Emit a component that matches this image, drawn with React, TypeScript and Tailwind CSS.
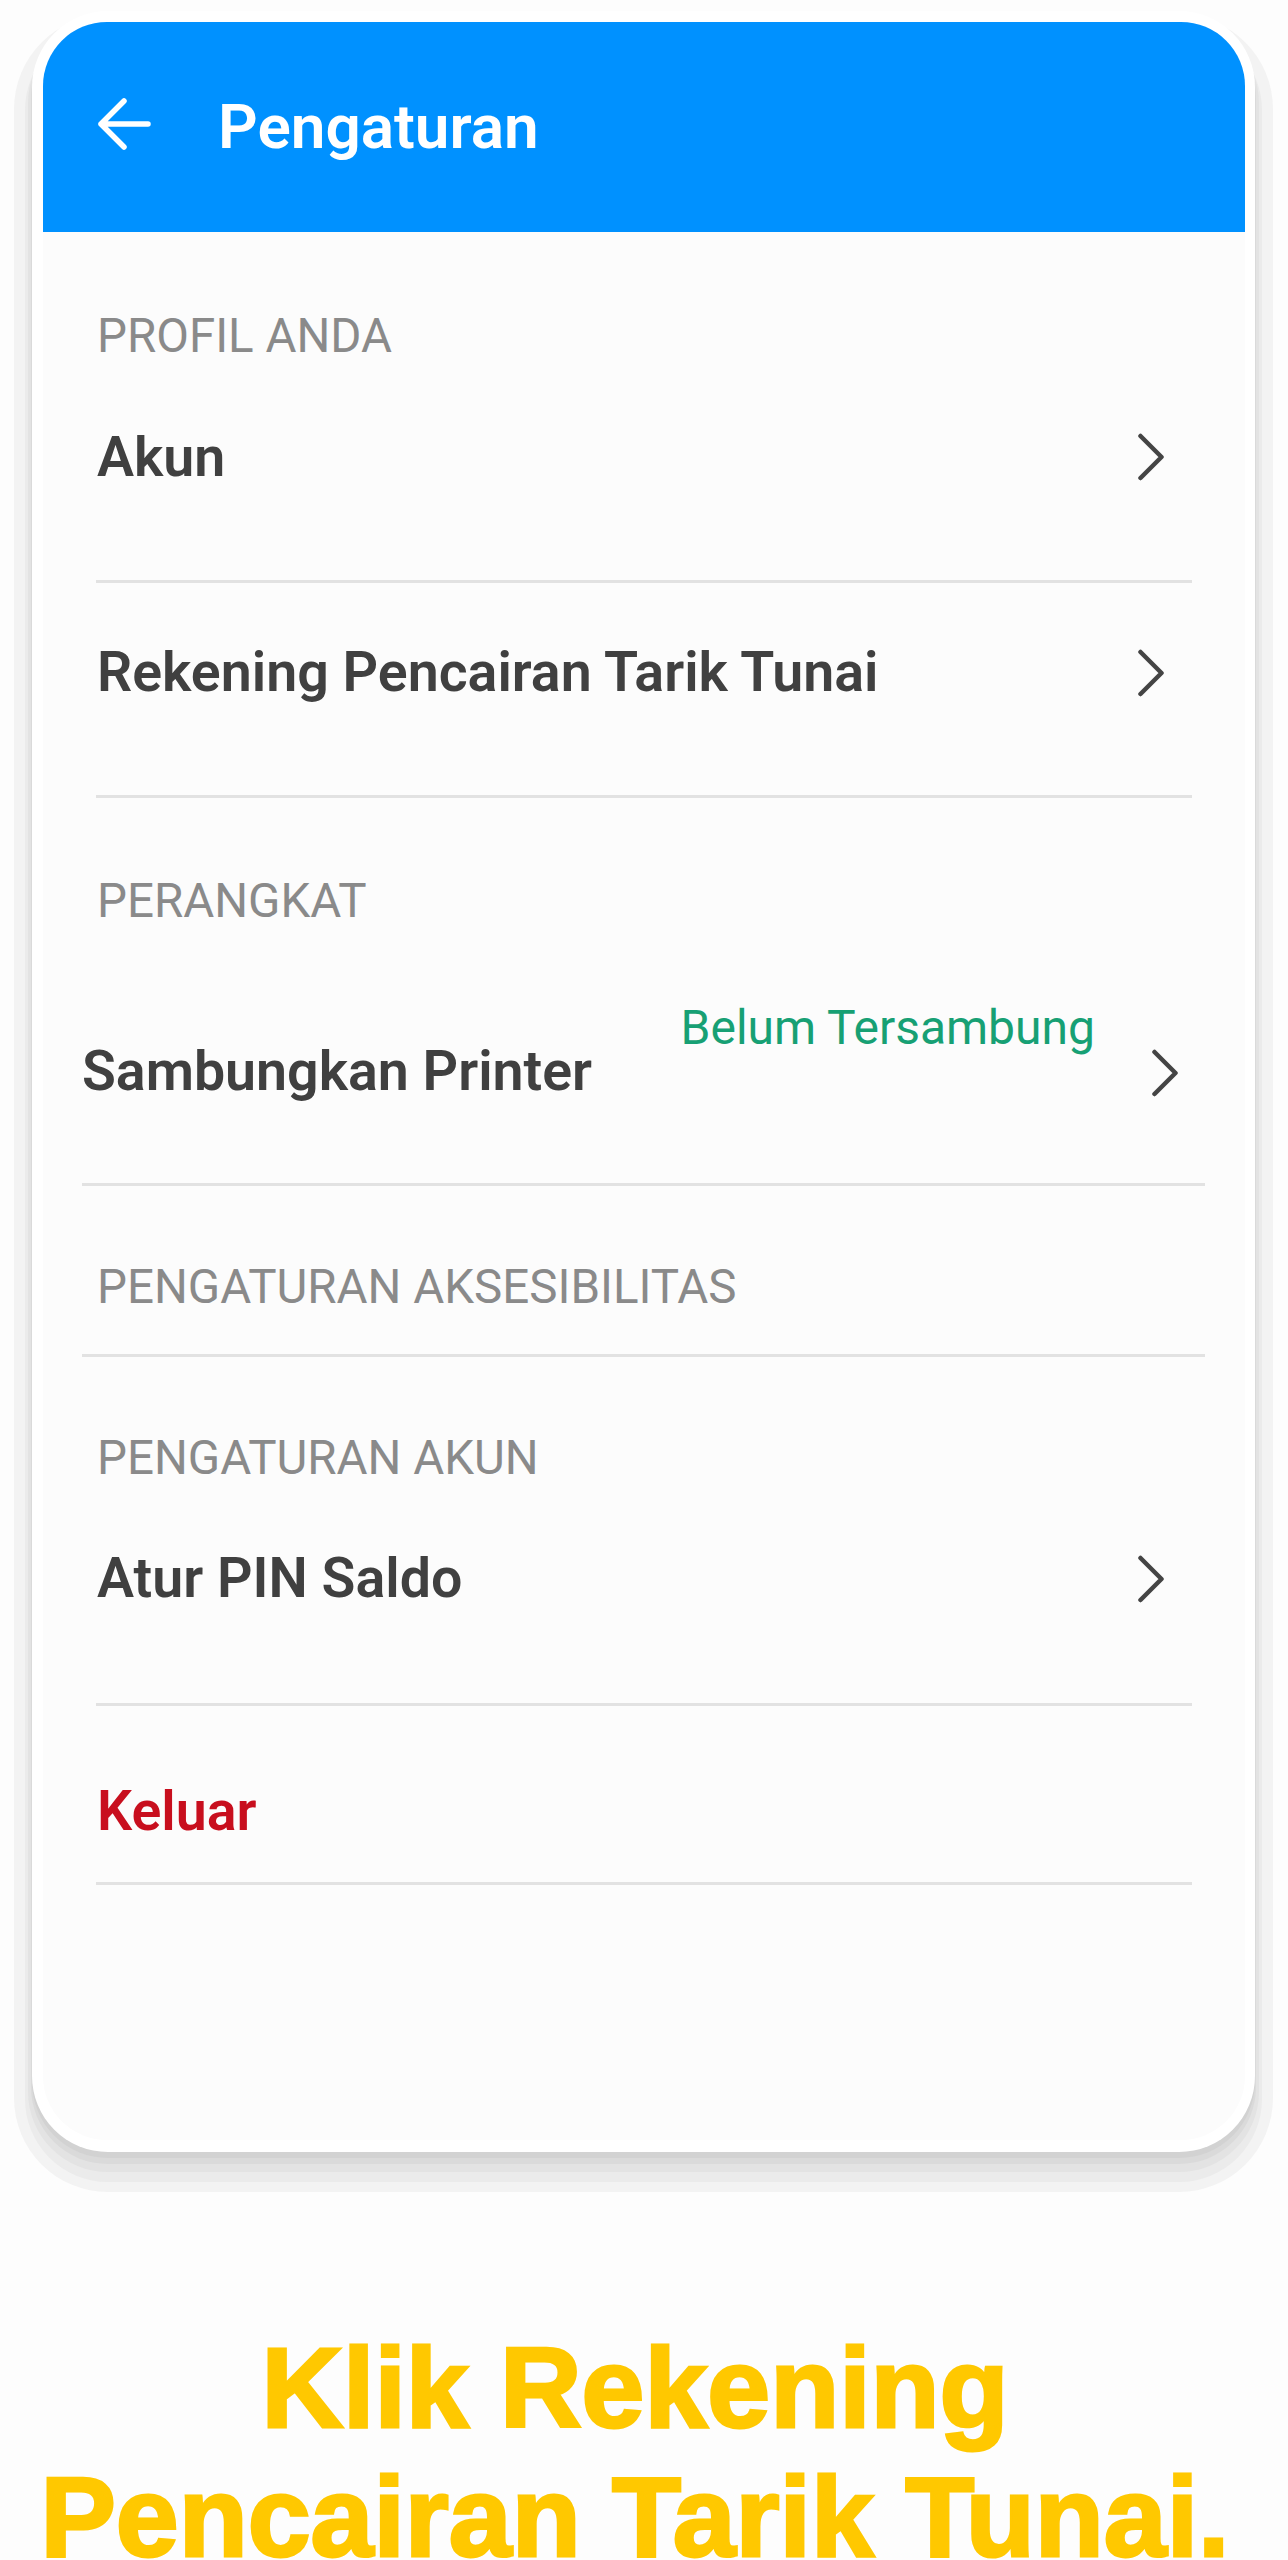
import React from "react";

const Chevron = () => (
  <svg width="28" height="48" viewBox="0 0 28 48" fill="none" className="shrink-0">
    <path d="M3.5 3 L24.5 24 L3.5 45" stroke="#444444" strokeWidth="4.5" strokeLinecap="round" strokeLinejoin="round" />
  </svg>
);

const Divider = () => <div className="mx-[53px] h-[3px] bg-[#e2e2e2]" />;
const WideDivider = () => <div className="ml-[39px] mr-[40px] h-[3px] bg-[#e2e2e2]" />;

const Label = ({ children, mt }: { children: React.ReactNode; mt: string }) => (
  <div className={`${mt} pl-[54px] text-[47.5px] leading-none text-[#8a8a8a]`}>{children}</div>
);

const Row = ({ children, mt }: { children: React.ReactNode; mt: string }) => (
  <div className={`${mt} flex items-center justify-between pl-[54px] pr-[80px]`}>
    <span className="text-[55.5px] leading-none font-semibold text-[#404040]">{children}</span>
    <Chevron />
  </div>
);

export default function App() {
  return (
    <div className="h-[2560px] w-[1288px] overflow-hidden bg-[#fdfdfd] font-['Roboto',sans-serif]">
      <div className="pl-[32px] pt-[11px]">
        <div className="h-[2141px] w-[1223px] rounded-[76px] bg-white p-[11px] shadow-[0_6px_0_0_#d2d2d2,0_11px_0_1px_#dadada,0_16px_0_4px_#e3e3e3,0_23px_0_7px_#ebebeb,0_22px_0_18px_#f3f3f3]">
          <div className="flex h-[2118px] w-[1202px] flex-col overflow-hidden rounded-[64px] bg-[#fcfcfc]">
            <div className="flex h-[210px] shrink-0 items-center bg-[#0091ff] pl-[54px]">
              <svg width="54" height="54" viewBox="0 0 54 54" fill="none" className="mb-[7px] shrink-0">
                <path d="M4 27 H51 M27 4 L4 27 L27 50" stroke="white" strokeWidth="5.5" strokeLinecap="round" strokeLinejoin="round" />
              </svg>
              <span className="ml-[67px] text-[62px] leading-none font-semibold text-white">Pengaturan</span>
            </div>

            <Label mt="mt-[81px]">PROFIL ANDA</Label>
            <Row mt="mt-[69px]">Akun</Row>
            <div className="mt-[95px]"><Divider /></div>
            <Row mt="mt-[62px]">Rekening Pencairan Tarik Tunai</Row>
            <div className="mt-[94px]"><Divider /></div>

            <Label mt="mt-[80px]">PERANGKAT</Label>
            <div className="flex h-[258px] items-start pl-[39px] pr-[66px]">
              <span className="mt-[119px] text-[55.5px] leading-none font-semibold text-[#404040]">Sambungkan Printer</span>
              <span className="ml-auto mr-[56px] mt-[79px] text-[48px] leading-none text-[#17a074]">Belum Tersambung</span>
              <div className="mt-[124px]"><Chevron /></div>
            </div>
            <WideDivider />

            <Label mt="mt-[78px]">PENGATURAN AKSESIBILITAS</Label>
            <div className="mt-[42px]"><WideDivider /></div>

            <Label mt="mt-[78px]">PENGATURAN AKUN</Label>
            <Row mt="mt-[69px]">Atur PIN Saldo</Row>
            <div className="mt-[96px]"><Divider /></div>

            <div className="mt-[78px] pl-[54px] text-[55.5px] leading-none font-semibold text-[#c80f1e]">Keluar</div>
            <div className="mt-[43px]"><Divider /></div>
          </div>
        </div>
      </div>

      <div className="mt-[172px] pr-[18px] text-center font-['Liberation_Sans',Arial,sans-serif] text-[113px] leading-[129px] font-bold text-[#ffc800] [-webkit-text-stroke:3px_#ffc800]">
        <div>Klik Rekening</div>
        <div>Pencairan Tarik Tunai.</div>
      </div>
    </div>
  );
}
